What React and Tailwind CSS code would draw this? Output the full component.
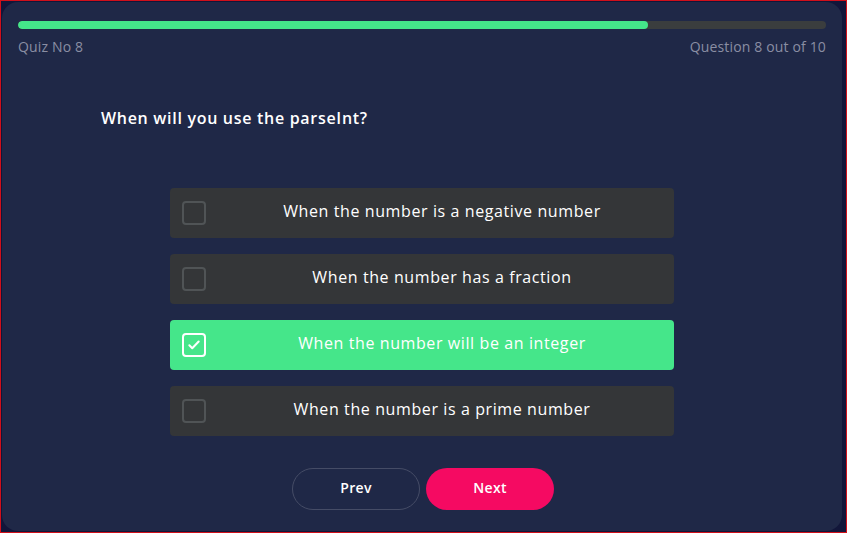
import { useState } from 'react'

const options = [
  'When the number is a negative number',
  'When the number has a fraction',
  'When the number will be an integer',
  'When the number is a prime number',
]

export default function App() {
  const [picked, setPicked] = useState(2)

  return (
    <div className="w-[847px] h-[533px] bg-[#12163a] border border-[#d0101a] p-px" style={{ fontFamily: '"Open Sans", sans-serif' }}>
      <div className="h-full w-[840px] rounded-[16px] bg-[#1f2847] px-4 pt-[19px] flex flex-col">
        <div className="h-2 rounded-full bg-[#3a3d3e] overflow-hidden">
          <div className="h-full w-[78%] rounded-full bg-[#44e58a]" />
        </div>
        <div className="flex justify-between mt-[7px] text-[14px] font-medium text-[#8a8ea3] tracking-[0.15px]">
          <span>Quiz No 8</span>
          <span>Question 8 out of 10</span>
        </div>

        <h1 className="mt-[49px] ml-[83px] text-[16px] font-semibold text-white tracking-[0.7px]">When will you use the parseInt?</h1>

        <div className="mt-[58px] w-[504px] mx-auto flex flex-col gap-4">
          {options.map((o, i) => {
            const on = i === picked
            return (
              <button
                key={o}
                onClick={() => setPicked(i)}
                className={`h-[50px] rounded flex items-center pl-3 text-[16px] font-medium text-white tracking-[0.6px] ${on ? 'bg-[#45e68a]' : 'bg-[#343638]'}`}
              >
                <span className={`w-6 h-6 shrink-0 rounded border-2 flex items-center justify-center ${on ? 'border-white' : 'border-[#505456]'}`}>
                  {on && (
                    <svg width="14" height="14" viewBox="0 0 24 24" fill="none" stroke="white" strokeWidth="3.5" strokeLinecap="round" strokeLinejoin="round">
                      <path d="M4 12.5l5 5L20 6" />
                    </svg>
                  )}
                </span>
                <span className="flex-1 ml-1 text-center pb-[5px]">{o}</span>
              </button>
            )
          })}
        </div>

        <div className="mt-8 flex justify-center gap-[6px] pl-[2px]">
          <button className="w-[128px] h-[42px] rounded-full border border-[#454c66] text-white text-[14px] font-semibold tracking-[0.3px] pb-[4px]">Prev</button>
          <button className="w-[128px] h-[42px] rounded-full bg-[#f50a62] text-white text-[14px] font-semibold tracking-[0.3px] pb-[4px]">Next</button>
        </div>
      </div>
    </div>
  )
}
